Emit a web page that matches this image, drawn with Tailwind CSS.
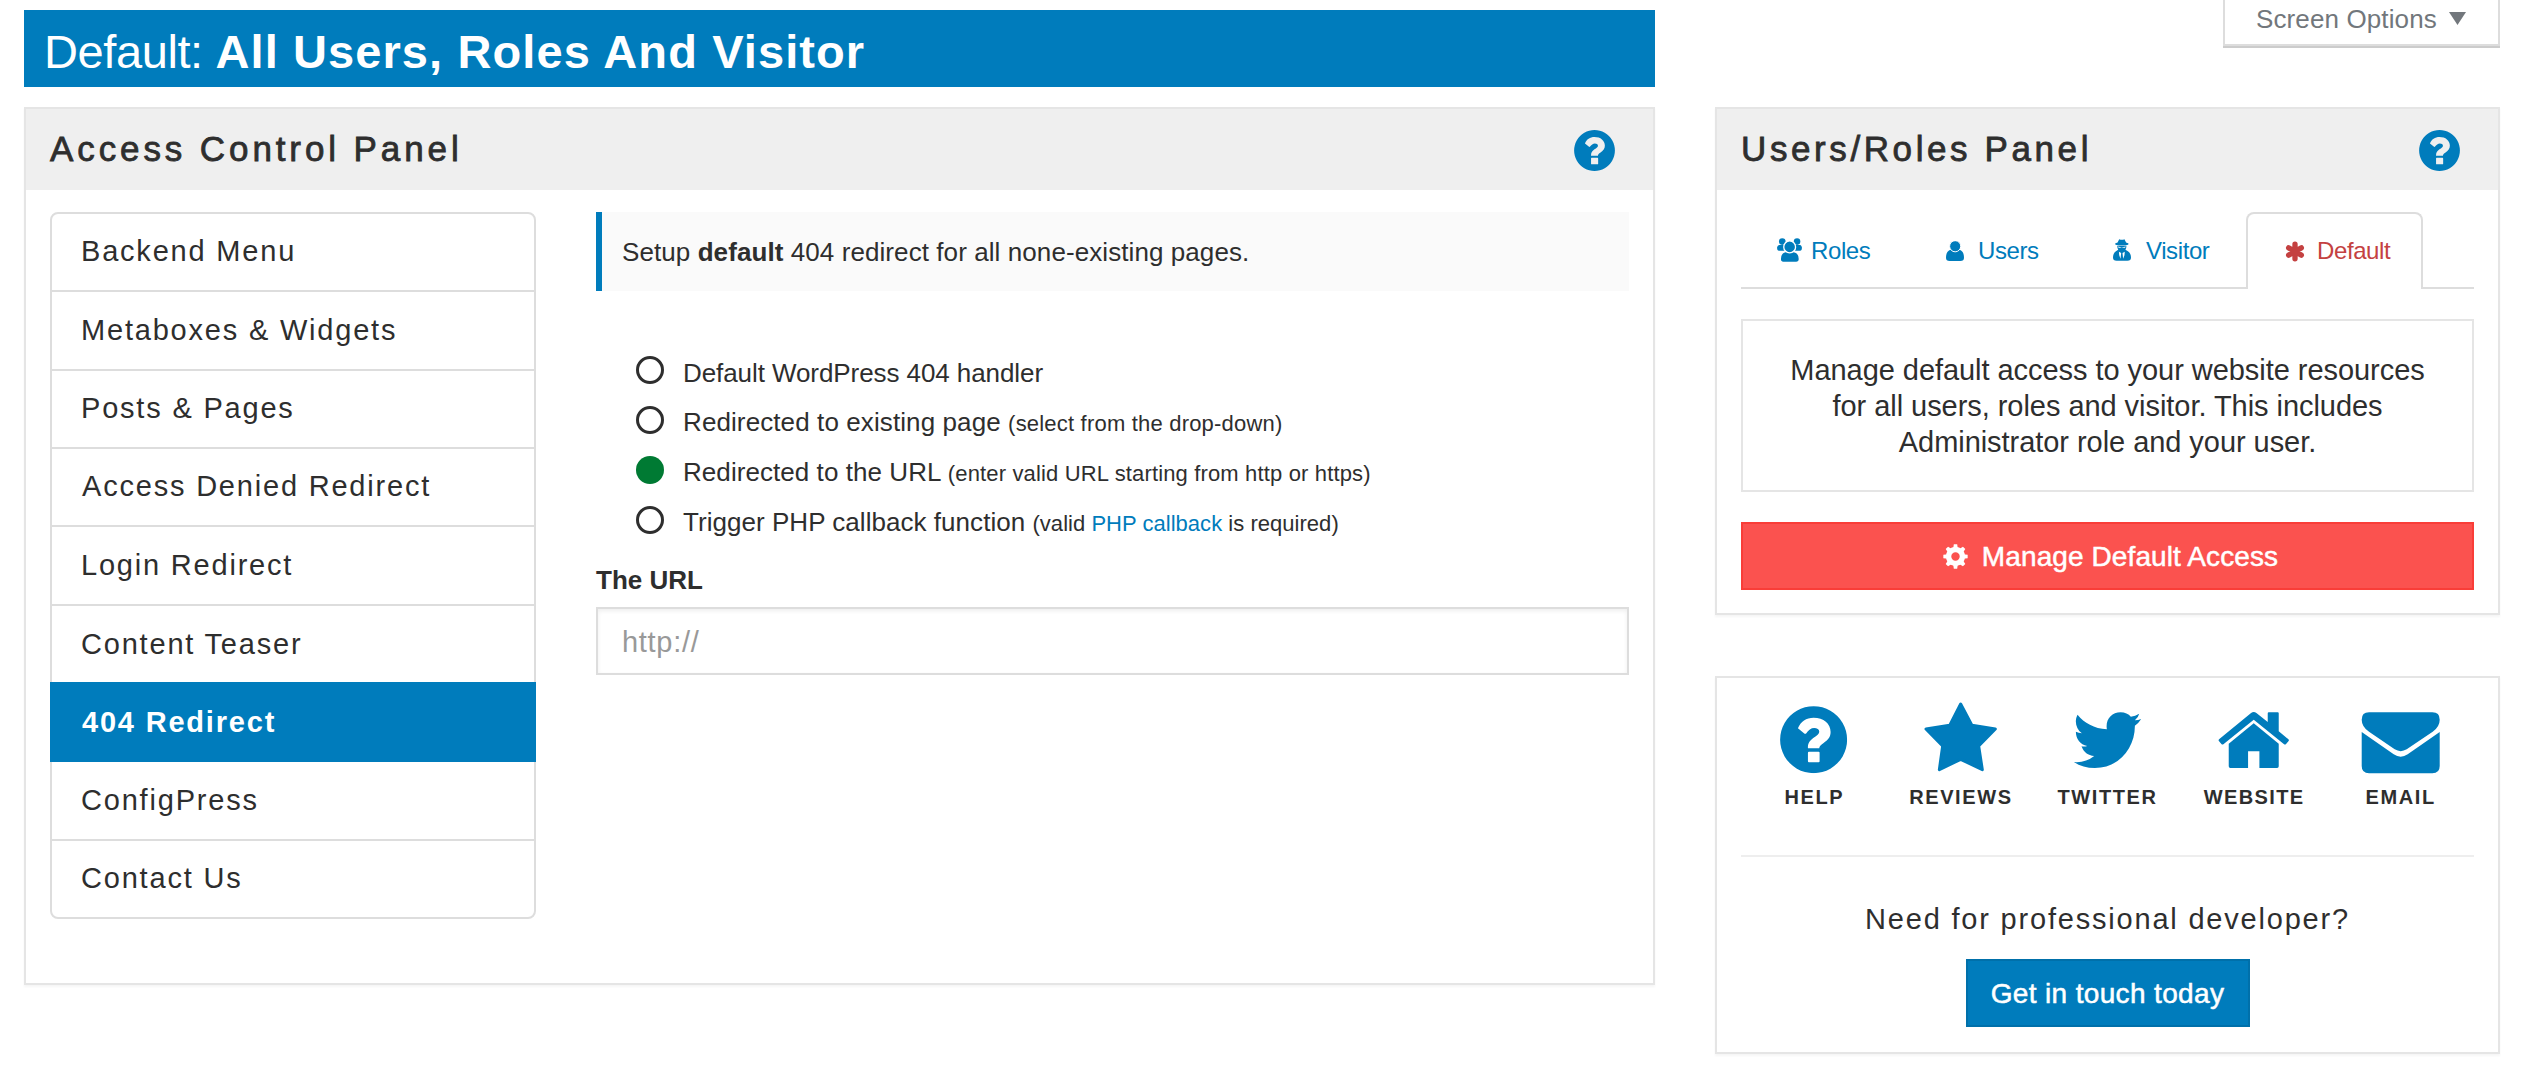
<!DOCTYPE html>
<html lang="en">
<head>
<meta charset="utf-8">
<title>Access Control Panel</title>
<script src="https://cdn.jsdelivr.net/npm/@tailwindcss/browser@4"></script>
</head>
<body class="bg-white text-[#2e2e2e] font-['Liberation_Sans',Arial,sans-serif] w-[2526px] h-[1072px] overflow-hidden">
<svg class="hidden">
  <symbol id="help" viewBox="46 47 202 202">
    <path fill-rule="evenodd" d="M147 47.500a100.500 100.500 0 1 0 .1 0ZM100 114C108 93 125 82 147 82C177 82 198 99 198 125C198 140 190 149 177 158C168 164 164 168 164 174L130 174C129 158 136 150 147 142C157 135 164 131 164 124C164 117 157 113 149 113C139 113 132 119 124 130Q122 131 120 130ZM133 184H162Q165 184 165 187V213Q165 216 162 216H133Q130 216 130 213V187Q130 184 133 184Z"/>
  </symbol>
</svg>

<div class="flex justify-between pl-6 pr-[26px]">
  <!-- main column -->
  <main class="w-[1631px] pt-[10px]">
    <h1 class="h-[77px] bg-[#007cbc] text-white text-[47px] leading-[77px] pl-5 pt-[3px] whitespace-pre"><span class="tracking-[-0.4px]">Default: </span><b class="tracking-[1.1px]">All Users, Roles And Visitor</b></h1>

    <section class="mt-5 h-[878px] border-2 border-[#e5e5e5] shadow-[0_2px_2px_rgba(0,0,0,0.04)]">
      <header class="h-[81px] bg-[#efefef] flex items-center justify-between pl-6 pr-[38px]">
        <h2 class="text-[35px] leading-[40px] tracking-[3.9px] -mt-[2px] [-webkit-text-stroke:0.8px_#2e2e2e]">Access Control Panel</h2>
        <svg class="size-[41px] mt-[2px] fill-[#007cbc]"><use href="#help"/></svg>
      </header>
      <div class="flex gap-[60px] px-6 pt-[22px]">
        <ul class="w-[486px] h-[707px] border-2 border-[#ddd] rounded-lg text-[29px] tracking-[1.8px] flex flex-col">
          <li class="h-[78.33px] border-b-2 border-[#ddd] flex items-center pl-[29px]">Backend Menu</li>
          <li class="h-[78.33px] border-b-2 border-[#ddd] flex items-center pl-[29px]">Metaboxes &amp; Widgets</li>
          <li class="h-[78.33px] border-b-2 border-[#ddd] flex items-center pl-[29px]">Posts &amp; Pages</li>
          <li class="h-[78.33px] border-b-2 border-[#ddd] flex items-center pl-[30px]">Access Denied Redirect</li>
          <li class="h-[78.33px] border-b-2 border-[#ddd] flex items-center pl-[29px]">Login Redirect</li>
          <li class="h-[78.33px] flex items-center pl-[29px]">Content Teaser</li>
          <li class="h-[80.33px] -mt-[2px] -mx-[2px] bg-[#007cbc] text-white font-bold flex items-center pl-8 pt-px">404 Redirect</li>
          <li class="h-[78.33px] border-b-2 border-[#ddd] flex items-center pl-[29px]">ConfigPress</li>
          <li class="h-[76.33px] flex items-center pl-[29px]">Contact Us</li>
        </ul>

        <div class="w-[1033px]">
          <p class="h-[79px] bg-[#fafafa] border-l-[6px] border-[#007cbc] pl-5 text-[26px] leading-[80px] tracking-[0.08px]">Setup <b>default</b> 404 redirect for all none-existing pages.</p>
          <div class="mt-14 pl-10 text-[26px] leading-[50px]">
            <label class="flex h-[50px]"><i class="size-[28px] mt-[9px] mr-[19px] rounded-full border-[3px] border-[#2e2e2e]"></i><span class="pt-px tracking-[-0.08px]">Default WordPress 404 handler</span></label>
            <label class="flex h-[50px]"><i class="size-[28px] mt-[9px] mr-[19px] rounded-full border-[3px] border-[#2e2e2e]"></i><span class="tracking-[0.1px]">Redirected to existing page <small class="text-[22px] tracking-[0.2px]">(select from the drop-down)</small></span></label>
            <label class="flex h-[50px]"><i class="size-[28px] mt-[9px] mr-[19px] rounded-full bg-[#007a33]"></i><span class="tracking-[0.06px]">Redirected to the URL <small class="text-[22px] tracking-[0.15px]">(enter valid URL starting from http or https)</small></span></label>
            <label class="flex h-[50px]"><i class="size-[28px] mt-[9px] mr-[19px] rounded-full border-[3px] border-[#2e2e2e]"></i><span class="tracking-[0.04px]">Trigger PHP callback function <small class="text-[22px] tracking-[0.03px]">(valid <a class="text-[#007cbc]">PHP callback</a> is required)</small></span></label>
          </div>
          <p class="mt-[13px] mb-[7px] text-[26px] leading-[40px] font-bold">The URL</p>
          <div class="h-[68px] border-2 border-[#ddd] shadow-[inset_0_2px_4px_rgba(0,0,0,0.07)] pl-6 text-[29px] leading-[66px] tracking-[0.7px] text-[#999]">http://</div>
        </div>
      </div>
    </section>
  </main>

  <!-- sidebar -->
  <aside class="w-[785px]">
    <div class="flex justify-end">
      <div class="w-[277px] h-[46px] border-2 border-t-0 border-[#ddd] shadow-[0_2px_0_#ccc] text-[#72777c] text-[26px] leading-[38px] tracking-[0.12px] pl-[31px] flex">Screen Options
        <svg class="w-[17px] h-[13px] mt-[12px] ml-[12px] fill-[#72777c]" viewBox="0 0 17 13"><path d="M0 0H17L8.500 13Z"/></svg>
      </div>
    </div>

    <section class="mt-[61px] h-[508px] border-2 border-[#e5e5e5] shadow-[0_2px_2px_rgba(0,0,0,0.04)]">
      <header class="h-[81px] bg-[#efefef] flex items-center justify-between pl-6 pr-[38px]">
        <h2 class="text-[35px] leading-[40px] tracking-[3.6px] -mt-[2px] [-webkit-text-stroke:0.8px_#2e2e2e]">Users/Roles Panel</h2>
        <svg class="size-[41px] mt-[2px] fill-[#007cbc]"><use href="#help"/></svg>
      </header>
      <div class="px-6 pt-[22px]">
        <nav class="flex h-[77px] text-[24px] tracking-[-0.4px] text-[#007cbc] fill-[#007cbc]">
          <a class="w-[168px] border-b-2 border-[#ddd] flex items-center pl-9 pt-[2px]">
            <svg class="w-[25px] h-[24px] mr-[9px] -mt-px" viewBox="111 86 76 73">
              <circle cx="127" cy="97" r="10"/><circle cx="172" cy="97" r="10"/>
              <path d="M117 107H131L136 125H116Q111 124 111 116Q112 108 117 107ZM182 107H168L163 125H182Q187 124 187 116Q186 108 182 107Z"/>
              <g class="stroke-white" stroke-width="4"><path d="M137 127H162Q179 130 179 150Q179 160 169 160H130Q121 160 121 150Q121 130 137 127Z"/><circle cx="149.500" cy="113" r="18"/></g>
            </svg>Roles</a>
          <a class="w-[168px] border-b-2 border-[#ddd] flex items-center pl-[37px] pt-[2px]">
            <svg class="w-[18px] h-[20px] mr-[14px]" viewBox="617 92 55 61">
              <path d="M630 119Q645 128 659 119Q672 124 672 143Q672 153 661 153H628Q617 153 617 143Q617 124 630 119Z"/><circle cx="645" cy="108" r="17" class="stroke-white" stroke-width="3"/>
            </svg>Users</a>
          <a class="w-[169px] border-b-2 border-[#ddd] flex items-center pl-9 pt-[2px]">
            <svg class="w-[18px] h-[22px] mr-[15px] -mt-px" viewBox="1119 87 55 66">
              <path d="M1138 87Q1146 91 1154 87L1159 97Q1167 99 1167 102Q1167 105 1157 106H1135Q1125 105 1125 102Q1125 99 1133 97Z"/>
              <path d="M1132 108H1160Q1160 114 1157 119Q1174 126 1174 143Q1174 153 1163 153H1130Q1119 153 1119 143Q1119 126 1135 119Q1132 114 1132 108Z"/>
              <path class="fill-white" d="M1134 109L1146 112L1158 109L1156 113H1148L1146 112L1144 113H1136ZM1137 125L1144 129L1142 147L1138 136ZM1155 125L1148 129L1150 147L1154 136Z"/>
            </svg>Visitor</a>
          <a class="w-[177px] border-2 border-b-0 border-[#ddd] rounded-t-lg flex items-center pl-[37px] pb-px text-[#c44141]">
            <svg class="w-[20px] h-[21px] mr-[12px] stroke-[#c44141]" viewBox="193 362 60 62" stroke-width="16" stroke-linecap="round"><path d="M223 371V415M204 382L242 404M242 382L204 404"/></svg>Default</a>
          <span class="flex-1 border-b-2 border-[#ddd]"></span>
        </nav>
        <p class="mt-[30px] h-[173px] border-2 border-[#e5e5e5] pt-[31px] text-center text-[29px] leading-[36px] tracking-[-0.05px]">Manage default access to your website resources<br>for all users, roles and visitor. This includes<br>Administrator role and your user.</p>
        <div class="mt-[30px] h-[68px] bg-[#fb524f] border-2 border-[#f93d38] flex items-center justify-center pl-[6px] text-white text-[28px] tracking-[0.1px] [-webkit-text-stroke:0.5px_#fff]">
          <svg class="size-[25px] mr-[14px]" viewBox="129 89 74 74" fill="#fff">
            <circle cx="166" cy="126" r="20.500" fill="none" stroke="#fff" stroke-width="16"/>
            <path d="M159 104L161 90H171L173 104ZM159 148L161 162H171L173 148ZM144 119L130 121V131L144 133ZM188 119L202 121V131L188 133ZM144 115L137 104L144 97L155 104ZM177 104L188 97L195 104L188 115ZM144 137L137 148L144 155L155 148ZM188 137L195 148L188 155L177 148Z"/>
          </svg><span class="pt-[2px]">Manage Default Access</span></div>
      </div>
    </section>

    <section class="mt-[61px] h-[378px] border-2 border-[#e5e5e5] shadow-[0_2px_2px_rgba(0,0,0,0.04)] px-6 pt-6">
      <div class="grid grid-cols-5 justify-items-center text-[20px] leading-[24px] font-bold tracking-[1.6px] fill-[#007cbc]">
        <a class="flex flex-col items-center gap-[11px]">
          <svg class="w-[80px] h-[72px]" viewBox="28.200 35 240 216"><use href="#help" x="46" y="47" width="202" height="202"/></svg>HELP</a>
        <a class="flex flex-col items-center gap-[11px]">
          <svg class="w-[80px] h-[72px]" viewBox="468 35 240 216"><path class="stroke-[#007cbc]" stroke-width="9" stroke-linejoin="round" d="M587 41L621 105L691 116L641 167L652 238L587 207L523 238L533 167L483 116L554 105Z"/></svg>REVIEWS</a>
        <a class="flex flex-col items-center gap-[11px]">
          <svg class="w-[80px] h-[72px]" viewBox="906.400 35 240 216"><path d="M938 73C958 98 988 114 1026 117C1021 88 1040 66 1067 66C1080 66 1091 71 1098 79Q1111 77 1123 70Q1120 82 1110 90Q1120 90 1129 86Q1121 99 1110 106C1111 170 1065 233 990 233C966 233 945 227 927 215Q962 218 988 197C970 196 956 186 950 168Q959 170 967 167C946 162 933 145 933 124Q941 128 951 129C933 116 928 92 938 73Z"/></svg>TWITTER</a>
        <a class="flex flex-col items-center gap-[11px] tracking-[1.4px]">
          <svg class="w-[80px] h-[72px]" viewBox="132.800 35 240 216"><path d="M244 68Q252 62 260 68L294 95V69Q294 66 297 66H324Q327 66 327 69V123L356 147Q359 150 356 153L349 161Q346 164 343 162L252 88L161 162Q158 164 155 161L148 153Q145 150 148 147ZM252 99L327 160V228Q327 233 322 233H269V183H235V233H182Q177 233 177 228V160Z"/></svg>WEBSITE</a>
        <a class="flex flex-col items-center gap-[11px]">
          <svg class="w-[80px] h-[72px]" viewBox="572.900 35 240 216"><path d="M597 66H787Q809 66 809 88Q809 109 788 124L710 177Q692 188 674 177L597 124Q575 109 575 88Q575 66 597 66ZM575 125L671 192Q692 206 713 192L809 125V227Q809 249 787 249H597Q575 249 575 227Z"/></svg>EMAIL</a>
      </div>
      <hr class="mt-[46px] border-t-2 border-[#eee]">
      <p class="mt-[44px] text-center text-[29px] leading-[36px] tracking-[1.8px]">Need for professional developer?</p>
      <div class="mt-[22px] mx-auto w-[284px] h-[68px] bg-[#007cbc] border-2 border-[#0070aa] text-white text-center text-[28px] leading-[66px] tracking-[0.35px] [-webkit-text-stroke:0.5px_#fff]">Get in touch today</div>
    </section>
  </aside>
</div>
</body>
</html>
